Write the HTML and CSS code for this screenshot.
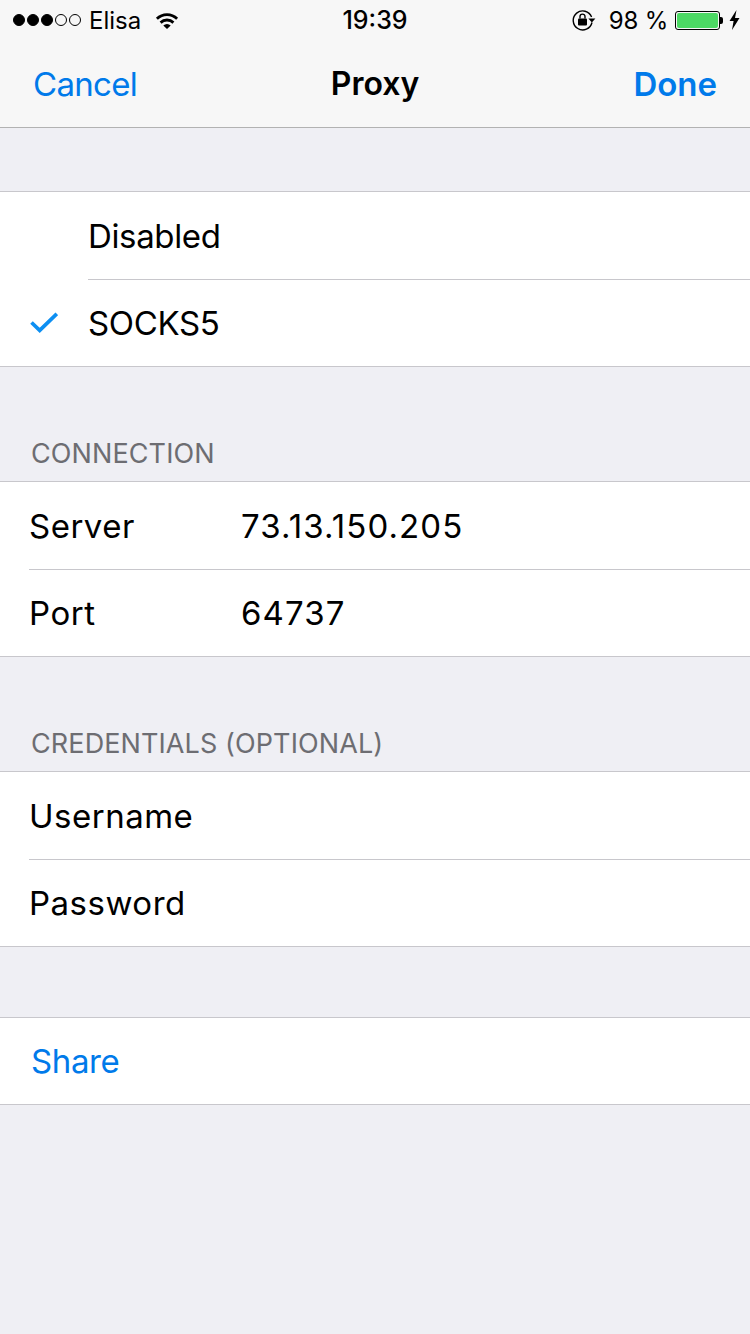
FILE: index.html
```html
<!doctype html>
<html lang="en">
  <head>
    <meta charset="utf-8" />
    <title>Proxy</title>
    <link rel="stylesheet" href="styles.css">
  </head>

  <body>
    <div class="topbar">
      <div class="statusbar">
        <div class="status_left">
          <div class="signal">
            <span class="dot"></span><span class="dot"></span><span class="dot"></span>
            <span class="dot empty"></span><span class="dot empty"></span>
          </div>
          <span class="carrier">Elisa</span>
          <svg class="wifi" width="24" height="19" viewBox="0 0 26 19">
            <path d="M1 6.6 A17 17 0 0 1 25 6.6 L22.9 8.8 A14 14 0 0 0 3.1 8.8 Z" fill="#000"/>
            <path d="M5 10.7 A11.4 11.4 0 0 1 21 10.7 L18.9 12.9 A8.4 8.4 0 0 0 7.1 12.9 Z" fill="#000"/>
            <path d="M9 14.8 A5.7 5.7 0 0 1 17 14.8 L13 18.8 Z" fill="#000"/>
          </svg>
        </div>
        <div class="status_time">19:39</div>
        <div class="status_right">
          <svg class="rotlock" width="24" height="22" viewBox="0 0 24 22">
            <path d="M20 13.5 A9.5 9.5 0 1 1 19.6 8" fill="none" stroke="#000" stroke-width="1.4"/>
            <path d="M16.4 9.6 L23.4 9.6 L19.9 13.4 Z" fill="#000"/>
            <rect x="6" y="9.5" width="9" height="7" rx="1" fill="#000"/>
            <path d="M8 9.5 V7.6 A2.5 2.5 0 0 1 13 7.6 V9.5" fill="none" stroke="#000" stroke-width="1.4"/>
          </svg>
          <span class="battery_text">98 %</span>
          <div class="battery">
            <div class="battery_body"><div class="battery_fill"></div></div>
            <div class="battery_tip"></div>
          </div>
          <svg class="bolt" width="11" height="20" viewBox="0 0 11 20">
            <path d="M7.5 0 L0.5 11 L4.6 11 L3 20 L10.5 8 L6 8 Z" fill="#000"/>
          </svg>
        </div>
      </div>
      <div class="navbar">
        <div class="nav_btn">Cancel</div>
        <div class="nav_title">Proxy</div>
        <div class="nav_btn done">Done</div>
      </div>
    </div>

    <div class="group first">
      <div class="row indent"><span class="check_slot"></span><span class="row_inner choice">Disabled</span></div>
      <div class="row indent last">
        <span class="check_slot">
          <svg width="28" height="22" viewBox="0 0 28 22">
            <path d="M1.5 10.5 L9.7 18.4 L26.8 1.8" fill="none" stroke="#0d8ff2" stroke-width="3.7"/>
          </svg>
        </span>
        <span class="row_inner choice">SOCKS5</span>
      </div>
    </div>

    <div class="section_title">CONNECTION</div>
    <div class="group">
      <div class="row"><span class="row_inner"><span class="label">Server</span><span class="value">73.13.150.205</span></span></div>
      <div class="row last"><span class="row_inner"><span class="label">Port</span><span class="value">64737</span></span></div>
    </div>

    <div class="section_title">CREDENTIALS (OPTIONAL)</div>
    <div class="group">
      <div class="row"><span class="row_inner"><span class="label">Username</span></span></div>
      <div class="row last"><span class="row_inner"><span class="label">Password</span></span></div>
    </div>

    <div class="group share_group">
      <div class="row last"><span class="row_inner share">Share</span></div>
    </div>
  </body>
</html>
```

FILE: styles.css
```css
html,
body {
  margin: 0;
  height: 100%;
}

body {
  background-color: #efeff4;
  color: #000;
  font-family: "Inter", "Liberation Sans", sans-serif;
  overflow: hidden;
}

.topbar {
  background-color: #f7f7f7;
  border-bottom: 1px solid #b2b2b2;
  height: 127px;
}

.statusbar {
  display: flex;
  justify-content: space-between;
  align-items: center;
  height: 40px;
  position: relative;
}

.status_left,
.status_right {
  display: flex;
  align-items: center;
}

.status_left {
  padding-left: 13px;
}

.status_right {
  padding-right: 10px;
}

.signal {
  display: flex;
  gap: 2px;
}

.dot {
  width: 12px;
  height: 12px;
  border-radius: 50%;
  background-color: #000;
  border: 1px solid #000;
  box-sizing: border-box;
}

.dot.empty {
  background-color: transparent;
}

.carrier {
  font-size: 24px;
  margin-left: 8px;
}

.wifi {
  margin-left: 14px;
}

.status_time {
  position: absolute;
  left: 0;
  right: 0;
  text-align: center;
  font-size: 25px;
  font-weight: 500;
}

.rotlock {
  margin-right: -1px;
}

.battery_text {
  font-size: 24px;
  margin-left: 14px;
  letter-spacing: -0.2px;
}

.battery {
  display: flex;
  align-items: center;
  margin-left: 7px;
}

.battery_body {
  box-sizing: border-box;
  width: 45px;
  height: 19px;
  border: 1px solid #000;
  border-radius: 3px;
  padding: 1px;
}

.battery_fill {
  height: 100%;
  background-color: #4cd964;
  border-radius: 2px;
}

.battery_tip {
  width: 3px;
  height: 7px;
  background-color: #000;
  border-radius: 0 2px 2px 0;
}

.bolt {
  margin-left: 6px;
}

.navbar {
  display: flex;
  justify-content: space-between;
  align-items: center;
  height: 87px;
  padding: 0 33px;
}

.nav_btn {
  flex: 1;
  color: #007aea;
  font-size: 33px;
  letter-spacing: -0.7px;
}

.nav_btn.done {
  font-weight: 600;
  letter-spacing: 0;
  text-align: right;
}

.nav_title {
  font-size: 32px;
  font-weight: 600;
}

.group {
  background-color: #fff;
  border-top: 1px solid #c8c7cc;
  border-bottom: 1px solid #c8c7cc;
}

.group.first {
  margin-top: 63px;
}

.share_group {
  margin-top: 70px;
}

.row {
  display: flex;
  box-sizing: border-box;
  height: 88px;
  font-size: 33px;
  padding-left: 29px;
}

.row.last {
  height: 86px;
}

.row.indent {
  padding-left: 0;
}

.check_slot {
  width: 88px;
  flex-shrink: 0;
  display: flex;
  align-items: center;
  justify-content: center;
}

.row_inner {
  flex: 1;
  display: flex;
  align-items: center;
  border-bottom: 1px solid #c8c7cc;
}

.row.last .row_inner {
  border-bottom: none;
}

.choice {
  letter-spacing: -0.35px;
}

.label {
  width: 212px;
  letter-spacing: 0.5px;
}

.value {
  letter-spacing: 1.1px;
}

.share {
  color: #007aea;
  padding-left: 2px;
  letter-spacing: -0.4px;
}

.section_title {
  height: 114px;
  box-sizing: border-box;
  padding: 71px 0 0 31px;
  color: #6d6d72;
  font-size: 27px;
  line-height: 32px;
  letter-spacing: 0.1px;
}
```
